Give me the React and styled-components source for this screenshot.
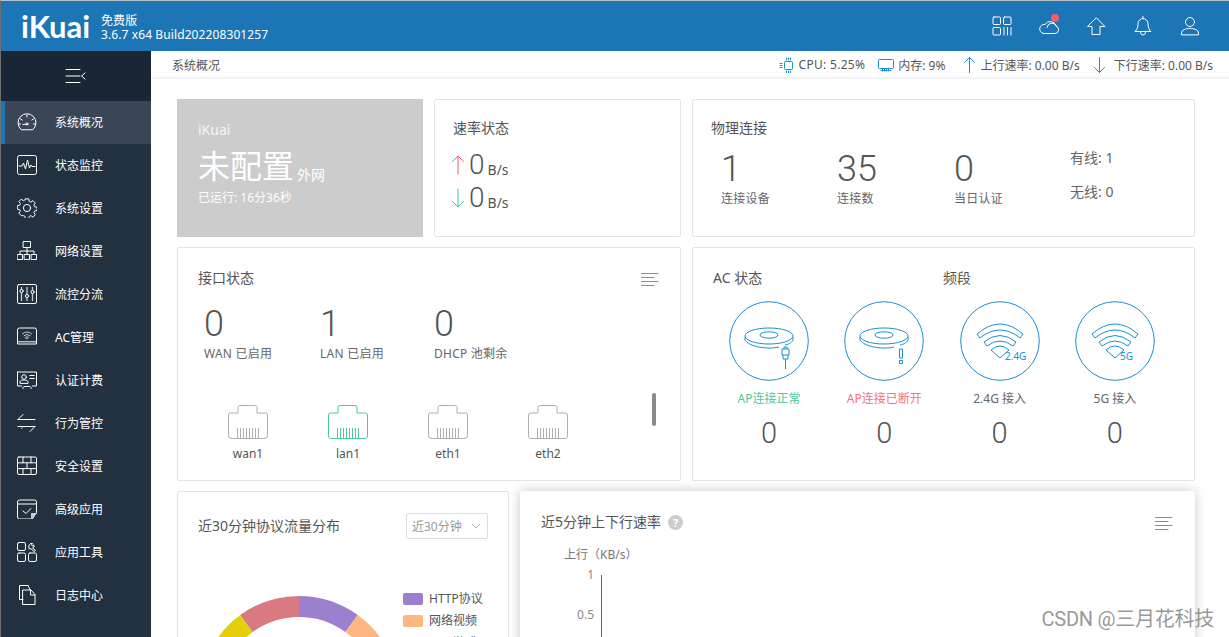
import React from "react";
import styled, { createGlobalStyle } from "styled-components";
import { ChevronDown } from "lucide-react";

const Global = createGlobalStyle`
  html, body { margin: 0; padding: 0; height: 100%; overflow: hidden; background: #fff; }
  body { font-family: "Noto Sans", "Noto Sans CJK SC", sans-serif; color: #555; }
  #root { height: 100%; }
  * { box-sizing: border-box; }
`;

const Shell = styled.div`
  width: 1229px; height: 637px; overflow: hidden; position: relative;
  display: flex; flex-direction: column;
  border-top: 1px solid #b9c4cc; border-left: 1px solid #6f6f6f;
`;
const Header = styled.header`
  height: 50px; flex: none; background: #1c75b5; color: #fff;
  display: flex; align-items: center; padding: 0 28px 0 20px;
`;
const Logo = styled.div`
  width: 80px; flex: none; font-family: "Lato", sans-serif; font-size: 31px; font-weight: 700;
  letter-spacing: 0; line-height: 50px; color: #fff; overflow: hidden;
`;
const Version = styled.div`
  font-size: 12px; line-height: 14px; color: #fff; white-space: nowrap;
  letter-spacing: .1px; margin-top: 4px;
`;
const HeaderIcons = styled.div`
  margin-left: auto; display: flex; align-items: center; gap: 25px;
`;
const HeaderIcon = styled.div`
  position: relative; width: 22px; height: 22px; display: flex;
`;
const Dot = styled.span`
  position: absolute; top: -1px; right: 1px; width: 8px; height: 8px;
  border-radius: 50%; background: #f65b6c;
`;
const Body = styled.div`
  flex: 1; min-height: 0; display: flex;
`;
const Sidebar = styled.nav`
  width: 150px; flex: none; background: #22303f; display: flex; flex-direction: column;
`;
const Toggle = styled.div`
  height: 50px; background: #1b2635; display: flex; align-items: center; justify-content: center;
`;
const NavItem = styled.div`
  height: 43px; flex: none; display: flex; align-items: center; gap: 18px;
  padding-left: ${p => (p.$active ? "12px" : "16px")};
  padding-bottom: 2px;
  border-left: ${p => (p.$active ? "4px solid #1c75b5" : "none")};
  background: ${p => (p.$active ? "#3a4656" : "transparent")};
  color: #fff; font-size: 12px;
`;
const Main = styled.main`
  flex: 1; min-width: 0; display: flex; flex-direction: column;
`;
const Crumbs = styled.div`
  height: 28px; flex: none; display: flex; align-items: center; justify-content: space-between;
  padding: 1px 16px 0 21px; border-bottom: 2px solid #f3f4f5; font-size: 12px; color: #555;
`;
const Stats = styled.div`
  display: flex; align-items: center; white-space: nowrap;
`;
const Stat = styled.span`
  display: flex; align-items: center; gap: ${p => p.$gap || 4}px; margin-left: ${p => p.$ml || 0}px;
  letter-spacing: ${p => p.$ls || 0}px;
`;
const Content = styled.div`
  padding: 20px 34px 0 26px; display: flex; flex-direction: column; gap: 10px;
`;
const Row = styled.div`
  display: flex; gap: 11px; height: ${p => p.$h}px;
`;
const Card = styled.section`
  width: ${p => p.$w}px; flex: none; background: #fff; border: 1px solid #e4e4e4; border-radius: 2px;
  padding: ${p => p.$pad || "20px"}; position: relative;
  box-shadow: ${p => (p.$raised ? "0 0 12px rgba(0,0,0,.22)" : "none")};
  ${p => p.$raised && "border-color: transparent;"}
`;
const WanCard = styled.section`
  width: 246px; flex: none; background: #ccc; color: #fff; padding: 21px 21px;
`;
const WanName = styled.div`font-size: 14px; line-height: 20px; color: #f6f6f6;`;
const WanState = styled.div`
  display: flex; align-items: flex-end; margin-top: 4px; font-size: 32px; line-height: 44px; color: #fff;
`;
const WanSub = styled.span`font-size: 14px; line-height: 20px; margin: 0 0 3px 3px;`;
const WanRun = styled.div`font-size: 12px; line-height: 16px; margin-top: 2px; color: #fff;`;
const Title = styled.div`
  font-size: 14px; line-height: 20px; color: #555; white-space: nowrap;
`;
const TitleRow = styled.div`
  display: flex; align-items: center; justify-content: space-between;
`;
const RateRow = styled.div`
  display: flex; align-items: flex-end; height: 33px; margin-top: ${p => p.$mt}px; gap: 3px;
`;
const RateValue = styled.span`font-family: "Roboto", sans-serif; font-weight: 300; font-size: 28px; line-height: 33px; color: #555;`;
const RateUnit = styled.span`font-size: 14px; line-height: 20px; color: #555; margin-bottom: 1px;`;
const RateArrow = styled.span`display: flex; margin: 0 1px 6px -2px;`;
const Numbers = styled.div`
  display: flex; margin-top: ${p => p.$mt || 3}px; padding-left: ${p => p.$pl || 0}px;
`;
const NumberCol = styled.div`
  width: ${p => p.$w}px; flex: none; display: flex; flex-direction: column;
`;
const BigNum = styled.div`font-family: "Roboto", sans-serif; font-weight: 300; font-size: 36px; line-height: 46px; color: #555;`;
const NumLabel = styled.div`font-size: 12px; line-height: 16px; margin-top: -1px; color: #666; white-space: nowrap; letter-spacing: .25px;`;
const Side = styled.div`
  display: flex; flex-direction: column; gap: 14px; font-size: 14px; line-height: 20px; color: #666; margin-top: 2px;
`;
const Ports = styled.div`
  display: flex; margin: 43px 0 0 0;
`;
const Port = styled.div`
  width: 100px; flex: none; display: flex; flex-direction: column; align-items: center; gap: 7px;
  font-size: 12px; line-height: 16px; color: #555;
`;
const Scrollthumb = styled.div`
  position: absolute; left: 474px; top: 145px; width: 4px; height: 33px; border-radius: 2px; background: #8a8a8a;
`;
const AcHead = styled.div`
  display: flex;
`;
const AcTitle = styled(Title)`width: 230px;`;
const AcGrid = styled.div`
  display: grid; grid-template-columns: repeat(4, 80px); column-gap: 35.3px; margin: 13px 0 0 16px;
`;
const AcCell = styled.div`
  width: 80px; display: flex; flex-direction: column; align-items: center;
`;
const AcLabel = styled.div`
  margin-top: 9px; font-size: 12px; line-height: 18px; white-space: nowrap; color: ${p => p.$c || "#666"};
`;
const AcValue = styled.div`font-family: "Roboto", sans-serif; font-weight: 300; font-size: 29px; line-height: 36px; margin-top: 7px; color: #555;`;
const Select = styled.div`
  width: 82px; height: 26px; border: 1px solid #ddd; border-radius: 2px; display: flex; align-items: center;
  justify-content: space-between; padding: 0 3px 0 5px; font-size: 12px; color: #999; margin-top: 1px;
`;
const DonutArea = styled.div`
  display: flex; position: relative; margin-top: 33px;
`;
const DonutSlot = styled.div`
  width: 204px; height: 200px; flex: none; margin: 24px 0 0 1px;
`;
const Legend = styled.div`
  display: flex; flex-direction: column; gap: 4px; margin-top: 18px;
`;
const LegendRow = styled.div`
  display: flex; align-items: center; gap: 6px; font-size: 12px; line-height: 18px; color: #555; white-space: nowrap;
`;
const Swatch = styled.span`
  width: 20px; height: 12px; border-radius: 2px; background: ${p => p.$c};
`;
const HelpTitle = styled.div`display: flex; align-items: center; gap: 7px;`;
const Help = styled.span`
  width: 15px; height: 15px; border-radius: 50%; background: #ccc; color: #fff; font-size: 11px; font-weight: 700;
  display: flex; align-items: center; justify-content: center;
`;
const Chart = styled.div`
  margin: 15px 0 0 23px; display: flex; flex-direction: column;
`;
const AxisName = styled.div`font-size: 12px; line-height: 16px; color: #777; white-space: nowrap;`;
const Plot = styled.div`
  display: flex; margin-top: 6px;
`;
const Ticks = styled.div`
  width: 37px; flex: none; display: flex; flex-direction: column; gap: 24px; align-items: flex-end;
  font-size: 12px; line-height: 16px; color: #888; padding-right: 7px; margin-top: -2px;
`;
const Axis = styled.div`width: 1px; height: 70px; background: #666; margin-top: 6px;`;
const Watermark = styled.div`
  position: absolute; right: 15px; top: 607px; font-family: "Roboto", "Noto Sans CJK SC", sans-serif;
  font-size: 20px; line-height: 22px; letter-spacing: -.25px; color: rgba(125,125,125,.8); white-space: nowrap;
`;

const S = ({ children, size = 20, vb = 20, stroke = "#fff", sw = 1, style, h }) => (
  <svg width={size} height={h || size} viewBox={`0 0 ${vb} ${h ? (h * vb) / size : vb}`} fill="none" stroke={stroke} strokeWidth={sw}
    strokeLinecap="round" strokeLinejoin="round" style={{ flex: "none", ...style }}>{children}</svg>
);

const icons = {
  gauge: <><path d="M4 17.5A9 9 0 1 1 16 17.5Z" /><path d="M10 3v2M3.5 7l1.6 1M16.5 7l-1.6 1M1.5 12h2M16.5 12h2M6 12.5l3 -.3" /><circle cx="10" cy="12" r="1" /></>,
  monitor: <><rect x=".5" y=".5" width="19" height="19" rx="2" /><path d="M2 11h3l1.5-3L8.5 14 10.5 5 12.5 13l1.5-3 1 1.5h3" /></>,
  gear: <><path d="M8.3 1h3.4l.5 2.6 1.6.7 2.2-1.5 2.4 2.4-1.5 2.2.7 1.6 2.6.5v3.4l-2.6.5-.7 1.6 1.5 2.2-2.4 2.4-2.2-1.5-1.6.7-.5 2.6H8.3l-.5-2.6-1.6-.7L4 18.1 1.6 15.7l1.5-2.2-.7-1.6L0 11.4V8l2.4-.5.7-1.6L1.6 3.7 4 1.3l2.2 1.5 1.6-.7z" transform="scale(.98) translate(.3 -.1)" /><circle cx="10" cy="10" r="3.6" /></>,
  network: <><rect x="6.5" y=".5" width="7" height="6" /><path d="M10 6.5V10M3 13v-3h14v3M10 10v3" /><rect x=".5" y="13.5" width="5" height="5" /><rect x="7.5" y="13.5" width="5" height="5" /><rect x="14.5" y="13.5" width="5" height="5" /></>,
  sliders: <><rect x=".5" y=".5" width="19" height="19" rx="1.5" /><path d="M4.5 3.5v13M10 3.5v13M15.5 3.5v13" strokeWidth="1.3" stroke="#c6ccd2" /><circle cx="4.5" cy="7" r="1.6" fill="#22303f" /><circle cx="10" cy="12" r="1.6" fill="#22303f" /><circle cx="15.5" cy="8" r="1.6" fill="#22303f" /></>,
  ac: <><path d="M.5 15.5V3a2 2 0 0 1 2-2h15a2 2 0 0 1 2 2v12.500M.5 15.500v1.500h19v-1.500M.500 14.800h19" /><path d="M5.500 6.800Q10 3 14.500 6.800M7 8.600Q10 6 13 8.600M8.500 10.300Q10 9 11.500 10.300L10 11.800z" stroke="#c6ccd2" /></>,
  card: <><path d="M.5 2h19v14h-4M.5 2v14h4M7 16.500h6M6 17.500v1M14 17.500v1" /><circle cx="7" cy="7" r="2.300" /><path d="M3 13v-1.300c0-1 2-1.700 4-1.700s4 .7 4 1.700V13zM12.800 5.500h4.500M12.800 8.500h4.500" /></>,
  arrows: <><path d="M1 6.500h17M6 1.500l-5 5M1 13.500h17M13 18.500l5-5" /><path d="M6 13.500l-1.500 2" stroke="#c6ccd2" /></>,
  wall: <><rect x=".5" y="1" width="19" height="17.500" rx="1.500" /><path d="M.500 6.800h19M.500 12.600h19M6 1v5.800M14 1v5.800M10 6.800v5.800M6 12.600v5.900M14 12.600v5.900" /></>,
  calendar: <><path d="M19.500 13V3a2 2 0 0 0-2-2h-15a2 2 0 0 0-2 2v15a2 2 0 0 0 2 2h12.500zM.500 5h19" /><path d="M6 12l3 2.500 5-5" /><path d="M14.500 20v-5.500h5" fill="#c6ccd2" stroke="#c6ccd2" /></>,
  apps: <><rect x=".5" y=".5" width="8" height="8" rx="1.500" /><rect x=".5" y="11" width="8" height="8.500" rx="1.500" /><rect x="11.500" y="11" width="8" height="8.500" rx="1.500" /><path d="M12 3.500L13.500 1.500 15.500 1.500 14.500 3 15.500 4 17 3 17 5 15.500 6 18.500 8.500 17 9.500 14 6.800 12.500 6.800z" /></>,
  files: <><path d="M11 .5H2.500v14H6M11 .5l2 4" /><path d="M6 5h8l4 4.500v10H6zM13.500 5v5h4.500" /></>,
};

const nav = [
  ["gauge", "系统概况", true], ["monitor", "状态监控"], ["gear", "系统设置"], ["network", "网络设置"],
  ["sliders", "流控分流"], ["ac", "AC管理"], ["card", "认证计费"], ["arrows", "行为管控"],
  ["wall", "安全设置"], ["calendar", "高级应用"], ["apps", "应用工具"], ["files", "日志中心"],
];

const ListIcon = () => (
  <S size={18} vb={18} stroke="#8a8a8a" style={{ marginRight: 1 }}><path d="M.500 4.500h16.500M.500 8.500h12.500M.500 12.500h16.500M.500 16.500h12.500" /></S>
);

const PortIcon = ({ c }) => (
  <svg width="40" height="34" viewBox="0 0 40 34" fill="none" stroke={c} style={{ flex: "none" }}>
    <path d="M12 .5h15a2 2 0 0 1 2 2V8h8.500a2 2 0 0 1 2 2v21a2.500 2.500 0 0 1-2.500 2.500H3A2.500 2.500 0 0 1 .5 31V10a2 2 0 0 1 2-2H10V2.500a2 2 0 0 1 2-2z" />
    <path d="M9.500 23v10M12.500 23v10M15.500 23v10M18.500 23v10M21.500 23v10M24.500 23v10M27.500 23v10M30.500 23v10" />
  </svg>
);

const Ring = ({ children }) => (
  <svg width="80" height="80" viewBox="0 0 80 80" fill="none" stroke="#1c8fd0" style={{ flex: "none" }}>
    <circle cx="40" cy="40" r="39.300" />
    {children}
  </svg>
);
const Disc = () => (
  <>
    <ellipse cx="40" cy="35" rx="24" ry="8" />
    <ellipse cx="40" cy="34" rx="9" ry="3.200" />
    <path d="M16 36v3c3 5 14 8 24 8 3 0 6 0 10-1M64 36v3c-1 2-3 4-8 5" />
  </>
);
const Wifi = ({ label, x }) => (
  <Ring>
    <path d="M17 33Q40 13 63 33L60 37Q40 21 20 37Z" />
    <path d="M24 41Q40 28 56 41L53 45Q40 35 27 45Z" />
    <path d="M31 49Q40 41 49 49L40 57Z" />
    <text x={x} y="59" fontSize="10" fill="#1c8fd0" stroke="none" fontFamily="'Noto Sans', sans-serif">{label}</text>
  </Ring>
);

const polar = (r, a) => {
  const t = ((a - 90) * Math.PI) / 180;
  return [100 + r * Math.cos(t), 100 + r * Math.sin(t)];
};
const seg = (a0, a1) => {
  const [x0, y0] = polar(100, a0), [x1, y1] = polar(100, a1), [x2, y2] = polar(79, a1), [x3, y3] = polar(79, a0);
  return `M${x0} ${y0}A100 100 0 0 1 ${x1} ${y1}L${x2} ${y2}A79 79 0 0 0 ${x3} ${y3}Z`;
};

export default function App() {
  return (
    <Shell>
      <Global />
      <Header>
        <Logo>iKuai</Logo>
        <Version>免费版<br />3.6.7 x64 Build202208301257</Version>
        <HeaderIcons>
          <HeaderIcon>
            <S size={22} vb={22}>
              <rect x="2" y="2" width="7.500" height="7.500" rx="1" /><rect x="12.500" y="2" width="7.500" height="7.500" rx="1" />
              <rect x="2" y="12.500" width="7.500" height="7.500" rx="1" /><path d="M13 12.500v7.500M16.500 12.500v7.500M20 12.500v7.500" />
            </S>
          </HeaderIcon>
          <HeaderIcon>
            <S size={22} vb={22}><path d="M5.500 18.500H17a3.800 3.800 0 0 0 1-7.400A6 6 0 0 0 7 9.500a4.500 4.500 0 0 0-1.500 9zM9 12.500a5 5 0 0 1 9.500-1.400" /></S>
            <Dot />
          </HeaderIcon>
          <HeaderIcon>
            <S size={22} vb={22}><path d="M11 3L2.500 11.500H7V19.500H15V11.500H19.500Z" /></S>
          </HeaderIcon>
          <HeaderIcon>
            <S size={22} vb={22}><path d="M11 3.500a5 5 0 0 0-5 5c0 4-1 6-3 8h16c-2-2-3-4-3-8a5 5 0 0 0-5-5zM11 1.500v2M8.500 17.500a2.500 2.500 0 0 0 5 0" /></S>
          </HeaderIcon>
          <HeaderIcon>
            <S size={22} vb={22}><circle cx="11" cy="7" r="4.500" /><path d="M2.500 19.500v-1.500c0-3 4-4.500 8.500-4.500s8.500 1.500 8.500 4.500v1.500z" /></S>
          </HeaderIcon>
        </HeaderIcons>
      </Header>
      <Body>
        <Sidebar>
          <Toggle>
            <S size={22} vb={22}>
              <path d="M1 4.500h14M1 11h14M1 17.500h14M20 8l-3.500 3 3.500 3" />
            </S>
          </Toggle>
          {nav.map(([ic, label, active]) => (
            <NavItem key={label} $active={active}>
              <S>{icons[ic]}</S>
              <span>{label}</span>
            </NavItem>
          ))}
        </Sidebar>
        <Main>
          <Crumbs>
            <span>系统概况</span>
            <Stats>
              <Stat $ls={0.3}>
                <S size={16} vb={16} stroke="#1c8fd0">
                  <rect x="5.500" y="4.500" width="8" height="8" rx="1" /><path d="M7.500 1v2M9.500 1v2M11.500 1v2M7.500 14v2M9.500 14v2M11.500 14v2M1 6.500h2M1 8.500h2M1 10.500h2" />
                </S>
                CPU: 5.25%
              </Stat>
              <Stat $ml={13}>
                <S size={16} vb={16} stroke="#1c8fd0">
                  <rect x=".5" y="2.500" width="15" height="9" rx="1" /><path d="M3 13.500h10M4.500 12v2M6.500 12v2M8.500 12v2M10.500 12v2" />
                </S>
                内存: 9%
              </Stat>
              <Stat $ml={17} $gap={4}>
                <S size={14} h={16} vb={14} stroke="#1c8fd0"><path d="M7.500 .5v15M2.500 5.500l5-5 5 5" /></S>
                上行速率: 0.00 B/s
              </Stat>
              <Stat $ml={12} $gap={8}>
                <S size={14} h={16} vb={14} stroke="#1c8fd0"><path d="M7.500 .5v15M2.500 10.500l5 5 5-5" /></S>
                下行速率: 0.00 B/s
              </Stat>
            </Stats>
          </Crumbs>
          <Content>
            <Row $h={138}>
              <WanCard>
                <WanName>iKuai</WanName>
                <WanState>未配置<WanSub>外网</WanSub></WanState>
                <WanRun>已运行: 16分36秒</WanRun>
              </WanCard>
              <Card $w={247} $pad="18px 18px">
                <Title>速率状态</Title>
                <RateRow $mt={10}>
                  <RateArrow><S size={14} h={20} vb={14} stroke="#f65b6c"><path d="M7 1v18M1.500 6.500L7 1l5.500 5.500" /></S></RateArrow>
                  <RateValue>0</RateValue><RateUnit>B/s</RateUnit>
                </RateRow>
                <RateRow $mt={0}>
                  <RateArrow><S size={14} h={20} vb={14} stroke="#3dc79b"><path d="M7 1v18M1.500 13.500L7 19l5.500-5.500" /></S></RateArrow>
                  <RateValue>0</RateValue><RateUnit>B/s</RateUnit>
                </RateRow>
              </Card>
              <Card $w={503} $pad="18px 18px">
                <Title>物理连接</Title>
                <Numbers $pl={10} $mt={8}>
                  <NumberCol $w={116}><BigNum>1</BigNum><NumLabel>连接设备</NumLabel></NumberCol>
                  <NumberCol $w={117}><BigNum>35</BigNum><NumLabel>连接数</NumLabel></NumberCol>
                  <NumberCol $w={116}><BigNum>0</BigNum><NumLabel>当日认证</NumLabel></NumberCol>
                  <Side><span>有线: 1</span><span>无线: 0</span></Side>
                </Numbers>
              </Card>
            </Row>
            <Row $h={234}>
              <Card $w={504} $pad="20px 20px">
                <TitleRow>
                  <Title>接口状态</Title>
                  <ListIcon />
                </TitleRow>
                <Numbers $pl={6} $mt={13}>
                  <NumberCol $w={116}><BigNum>0</BigNum><NumLabel>WAN 已启用</NumLabel></NumberCol>
                  <NumberCol $w={114}><BigNum>1</BigNum><NumLabel>LAN 已启用</NumLabel></NumberCol>
                  <NumberCol $w={100}><BigNum>0</BigNum><NumLabel>DHCP 池剩余</NumLabel></NumberCol>
                </Numbers>
                <Ports>
                  <Port><PortIcon c="#b0b0b0" />wan1</Port>
                  <Port><PortIcon c="#4fc8a0" />lan1</Port>
                  <Port><PortIcon c="#b0b0b0" />eth1</Port>
                  <Port><PortIcon c="#b0b0b0" />eth2</Port>
                </Ports>
                <Scrollthumb />
              </Card>
              <Card $w={503} $pad="20px 20px">
                <AcHead><AcTitle>AC 状态</AcTitle><Title>频段</Title></AcHead>
                <AcGrid>
                  <AcCell>
                    <Ring><Disc /><path d="M53 48h7v6h-7zM55 48v-2h3v2M54 54v4h5v-4M56.500 58v10" /></Ring>
                    <AcLabel $c="#4fc8a0">AP连接正常</AcLabel><AcValue>0</AcValue>
                  </AcCell>
                  <AcCell>
                    <Ring><Disc /><path d="M55.500 48h3v9h-3zM55.500 59.500h3v3h-3z" /></Ring>
                    <AcLabel $c="#f6717f">AP连接已断开</AcLabel><AcValue>0</AcValue>
                  </AcCell>
                  <AcCell><Wifi label="2.4G" x="45" /><AcLabel>2.4G 接入</AcLabel><AcValue>0</AcValue></AcCell>
                  <AcCell><Wifi label="5G" x="45" /><AcLabel>5G 接入</AcLabel><AcValue>0</AcValue></AcCell>
                </AcGrid>
              </Card>
            </Row>
            <Row $h={300}>
              <Card $w={332} $pad="20px 20px">
                <TitleRow>
                  <Title>近30分钟协议流量分布</Title>
                  <Select>近30分钟<ChevronDown size={16} strokeWidth={1} color="#888" /></Select>
                </TitleRow>
                <DonutArea>
                  <DonutSlot>
                    <svg width="200" height="200" viewBox="0 0 200 200" style={{ display: "block" }}>
                      <path d={seg(0, 36)} fill="#9b80cf" />
                      <path d={seg(36, 72)} fill="#ffb781" />
                      <path d={seg(252, 324)} fill="#e5cf0d" />
                      <path d={seg(324, 360)} fill="#d87a80" />
                    </svg>
                  </DonutSlot>
                  <Legend>
                    <LegendRow><Swatch $c="#9b80cf" />HTTP协议</LegendRow>
                    <LegendRow><Swatch $c="#ffb781" />网络视频</LegendRow>
                    <LegendRow><Swatch $c="#d87a80" />网页游戏</LegendRow>
                  </Legend>
                </DonutArea>
              </Card>
              <Card $w={675} $pad="20px 20px" $raised>
                <TitleRow>
                  <HelpTitle><Title>近5分钟上下行速率</Title><Help>?</Help></HelpTitle>
                  <ListIcon />
                </TitleRow>
                <Chart>
                  <AxisName>上行（KB/s）</AxisName>
                  <Plot>
                    <Ticks><span>1</span><span>0.5</span></Ticks>
                    <Axis />
                  </Plot>
                </Chart>
              </Card>
            </Row>
          </Content>
        </Main>
      </Body>
      <Watermark>CSDN @三月花科技</Watermark>
    </Shell>
  );
}
